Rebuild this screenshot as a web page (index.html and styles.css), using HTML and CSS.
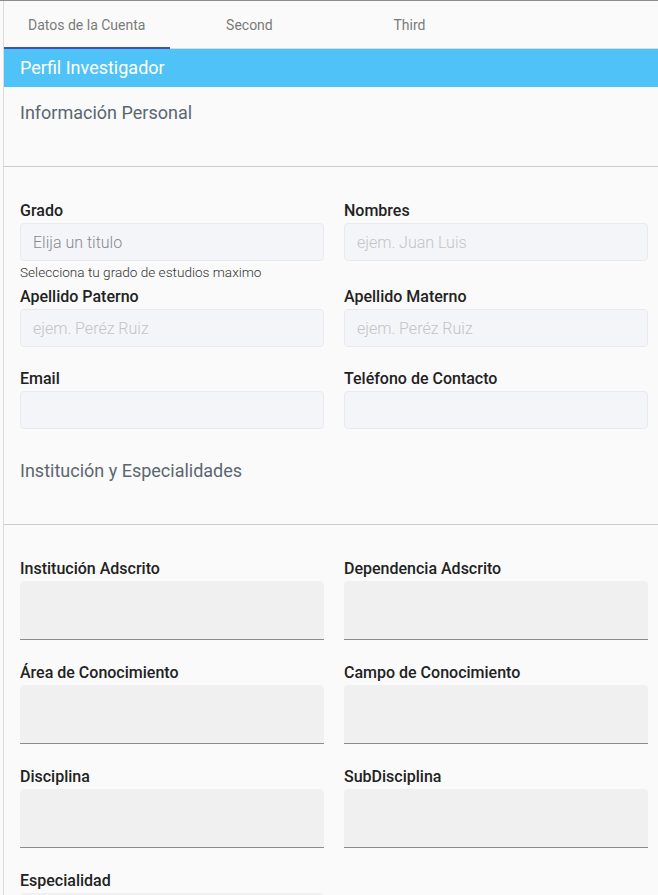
FILE: index.html
```html
<!DOCTYPE html>
<html lang="es">
<head>
<meta charset="utf-8">
<title>Perfil Investigador</title>
<link rel="stylesheet" href="styles.css">
</head>
<body>
<div class="page">
  <nav class="tabs">
    <div class="tab active">Datos de la Cuenta</div>
    <div class="tab">Second</div>
    <div class="tab">Third</div>
  </nav>
  <div class="banner">Perfil Investigador</div>

  <div class="section-head first">Información Personal</div>
  <hr class="rule">
  <div class="form-grid">
    <div class="field field--hint">
      <label class="label">Grado</label>
      <input class="input input--select" placeholder="Elija un titulo">
      <div class="hint">Selecciona tu grado de estudios maximo</div>
    </div>
    <div class="field">
      <label class="label">Nombres</label>
      <input class="input" placeholder="ejem. Juan Luis">
    </div>
    <div class="field">
      <label class="label">Apellido Paterno</label>
      <input class="input" placeholder="ejem. Peréz Ruiz">
    </div>
    <div class="field">
      <label class="label">Apellido Materno</label>
      <input class="input" placeholder="ejem. Peréz Ruiz">
    </div>
    <div class="field">
      <label class="label">Email</label>
      <input class="input">
    </div>
    <div class="field">
      <label class="label">Teléfono de Contacto</label>
      <input class="input">
    </div>
  </div>

  <div class="section-head">Institución y Especialidades</div>
  <hr class="rule">
  <div class="form-grid">
    <div class="field field--fill">
      <label class="label">Institución Adscrito</label>
      <div class="fill-box"></div>
    </div>
    <div class="field field--fill">
      <label class="label">Dependencia Adscrito</label>
      <div class="fill-box"></div>
    </div>
    <div class="field field--fill">
      <label class="label">Área de Conocimiento</label>
      <div class="fill-box"></div>
    </div>
    <div class="field field--fill">
      <label class="label">Campo de Conocimiento</label>
      <div class="fill-box"></div>
    </div>
    <div class="field field--fill">
      <label class="label">Disciplina</label>
      <div class="fill-box"></div>
    </div>
    <div class="field field--fill">
      <label class="label">SubDisciplina</label>
      <div class="fill-box"></div>
    </div>
    <div class="field field--fill">
      <label class="label">Especialidad</label>
      <div class="fill-box"></div>
    </div>
  </div>
</div>
</body>
</html>
```
FILE: styles.css
```css
* { box-sizing: border-box; }

html, body {
  margin: 0;
  padding: 0;
  background: #fafafa;
}

body {
  border-top: 1px solid #8c8c8c;
  font-family: Roboto, "Liberation Sans", sans-serif;
  color: #212121;
}

.page {
  margin-left: 3px;
  border-left: 1px solid #dcdcdc;
  min-height: 900px;
}

.tabs {
  display: flex;
  height: 48px;
  border-bottom: 1px solid #cfdde4;
}

.tab {
  position: relative;
  min-width: 160px;
  padding: 0 24px;
  display: flex;
  align-items: center;
  justify-content: center;
  font-size: 14px;
  color: #7a7a7a;
}

.tab.active::after {
  content: "";
  position: absolute;
  left: 0;
  right: -1px;
  bottom: -1px;
  height: 2px;
  background: #3f51b5;
}

.banner {
  height: 38px;
  background: #4fc3f7;
  color: #ffffff;
  font-size: 18px;
  line-height: 38px;
  padding-left: 16px;
  margin-bottom: 6px;
}

.section-head {
  padding: 8px 16px 0;
  font-size: 18px;
  line-height: 24px;
  color: #5b6770;
  margin-bottom: 41px;
}

.rule {
  margin: 0;
  border: 0;
  border-top: 1px solid #cccccc;
}

.form-grid {
  display: grid;
  grid-template-columns: 304px 304px;
  column-gap: 20px;
  padding: 34px 10px 0 16px;
}

.field {
  display: flex;
  flex-direction: column;
  margin-bottom: 22px;
}

.field--hint {
  margin-bottom: 8px;
}

.field--fill {
  margin-bottom: 23px;
}

.label {
  font-size: 16px;
  font-weight: 500;
  line-height: 20px;
  color: #222222;
  margin-bottom: 2px;
}

.input {
  height: 38px;
  width: 100%;
  border: 1px solid #e9eaee;
  border-radius: 4px;
  background: #f4f5f8;
  padding: 0 12px;
  font-family: Roboto, "Liberation Sans", sans-serif;
  font-size: 16px;
  color: #333;
  outline: none;
}

.input::placeholder {
  color: #c2c4c8;
  font-weight: 300;
}

.input--select::placeholder {
  color: #868a8e;
}

.hint {
  margin-top: 4px;
  font-size: 13.6px;
  font-weight: 300;
  line-height: 14px;
  color: #333;
}

.fill-box {
  height: 59px;
  background: #f0f0f0;
  border-bottom: 1px solid #8c8c8c;
  border-radius: 4px 4px 0 0;
}
```
